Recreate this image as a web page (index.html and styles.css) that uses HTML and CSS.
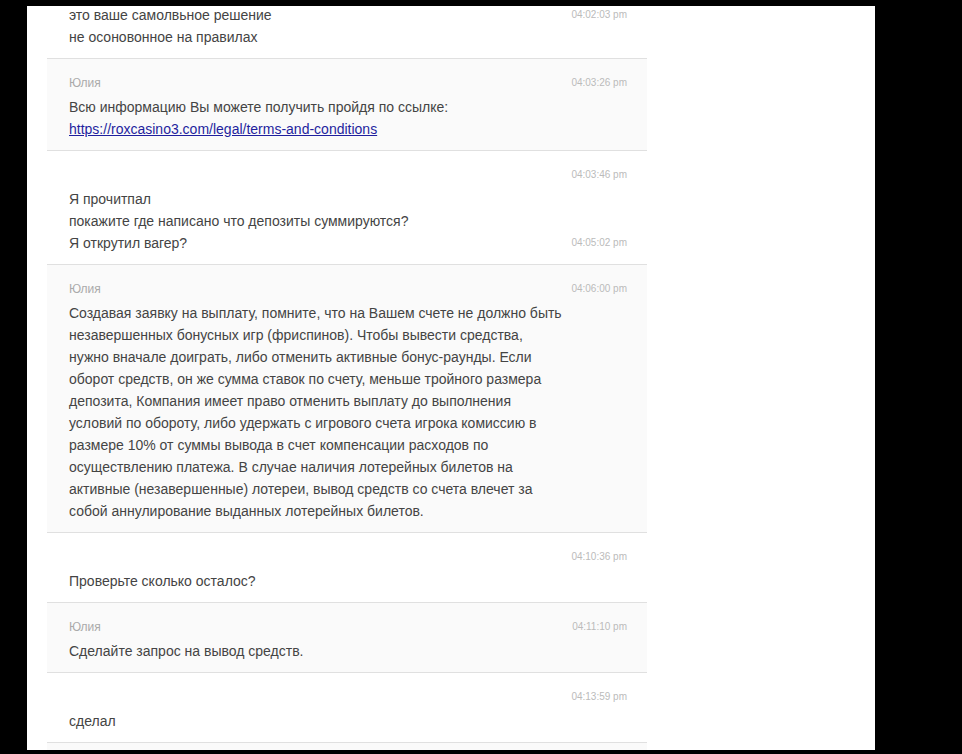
FILE: index.html
```html
<!DOCTYPE html>
<html lang="ru">
<head>
    <meta charset="UTF-8">
    <meta name="viewport" content="width=device-width, initial-scale=1.0">
    <title>История чата</title>
    <link rel="stylesheet" href="styles.css">
</head>
<body>
    <div class="chat-window">
        <ul class="message-list">
            <li class="message-group is-cut">
                <div class="message-line">
                    <p class="message-text">это ваше самолвьное решение<br>не осоновонное на правилах</p>
                    <span class="message-time">04:02:03 pm</span>
                </div>
            </li>

            <li class="message-group operator">
                <div class="message-head">
                    <span class="message-author">Юлия</span>
                    <span class="message-time">04:03:26 pm</span>
                </div>
                <p class="message-text">Всю информацию Вы можете получить пройдя по ссылке:<br><a href="#">https://roxcasino3.com/legal/terms-and-conditions</a></p>
            </li>

            <li class="message-group">
                <div class="message-head">
                    <span class="message-author"></span>
                    <span class="message-time">04:03:46 pm</span>
                </div>
                <p class="message-text">Я прочитпал<br>покажите где написано что депозиты суммируются?</p>
                <div class="message-line">
                    <p class="message-text">Я открутил вагер?</p>
                    <span class="message-time">04:05:02 pm</span>
                </div>
            </li>

            <li class="message-group operator">
                <div class="message-head">
                    <span class="message-author">Юлия</span>
                    <span class="message-time">04:06:00 pm</span>
                </div>
                <p class="message-text">Создавая заявку на выплату, помните, что на Вашем счете не должно быть незавершенных бонусных игр (фриспинов). Чтобы вывести средства, нужно вначале доиграть, либо отменить активные бонус-раунды. Если оборот средств, он же сумма ставок по счету, меньше тройного размера депозита, Компания имеет право отменить выплату до выполнения условий по обороту, либо удержать с игрового счета игрока комиссию в размере 10% от суммы вывода в счет компенсации расходов по осуществлению платежа. В случае наличия лотерейных билетов на активные (незавершенные) лотереи, вывод средств со счета влечет за собой аннулирование выданных лотерейных билетов.</p>
            </li>

            <li class="message-group">
                <div class="message-head">
                    <span class="message-author"></span>
                    <span class="message-time">04:10:36 pm</span>
                </div>
                <p class="message-text">Проверьте сколько осталос?</p>
            </li>

            <li class="message-group operator">
                <div class="message-head">
                    <span class="message-author">Юлия</span>
                    <span class="message-time">04:11:10 pm</span>
                </div>
                <p class="message-text">Сделайте запрос на вывод средств.</p>
            </li>

            <li class="message-group">
                <div class="message-head">
                    <span class="message-author"></span>
                    <span class="message-time">04:13:59 pm</span>
                </div>
                <p class="message-text">сделал</p>
            </li>

            <li class="message-group operator is-empty"></li>
        </ul>
    </div>
</body>
</html>
```

FILE: styles.css
```css
body {
    margin: 0;
    background-color: #000;
    font-family: "Liberation Sans", Arial, Helvetica, sans-serif;
    color: #444;
}
.chat-window {
    background-color: #fff;
    width: 848px;
    height: 744px;
    margin: 6px 0 0 27px;
    overflow: hidden;
}
.message-list {
    list-style: none;
    width: 600px;
    margin: -2px 0 0 20px;
    padding: 0;
}
.message-group {
    padding: 15px 20px 10px 22px;
    border-bottom: 1px solid #e0e0e0;
    background-color: #fff;
}
.message-group.operator {
    background-color: #fafafa;
}
.message-group.is-cut {
    padding-top: 0;
}
.message-group.is-empty {
    height: 40px;
}
.message-head {
    display: flex;
    justify-content: space-between;
    align-items: center;
    height: 18px;
    margin-bottom: 4px;
}
.message-author {
    font-size: 12px;
    line-height: 18px;
    color: #aaa;
}
.message-time {
    font-size: 10px;
    line-height: 18px;
    color: #bbb;
    white-space: nowrap;
}
.message-line {
    display: flex;
    justify-content: space-between;
    align-items: flex-start;
}
.message-line .message-time {
    line-height: 22px;
}
.message-text {
    max-width: 496px;
    margin: 0;
    font-size: 14px;
    line-height: 22px;
    color: #444;
}
.message-text a {
    color: #1f1f9e;
}
```
